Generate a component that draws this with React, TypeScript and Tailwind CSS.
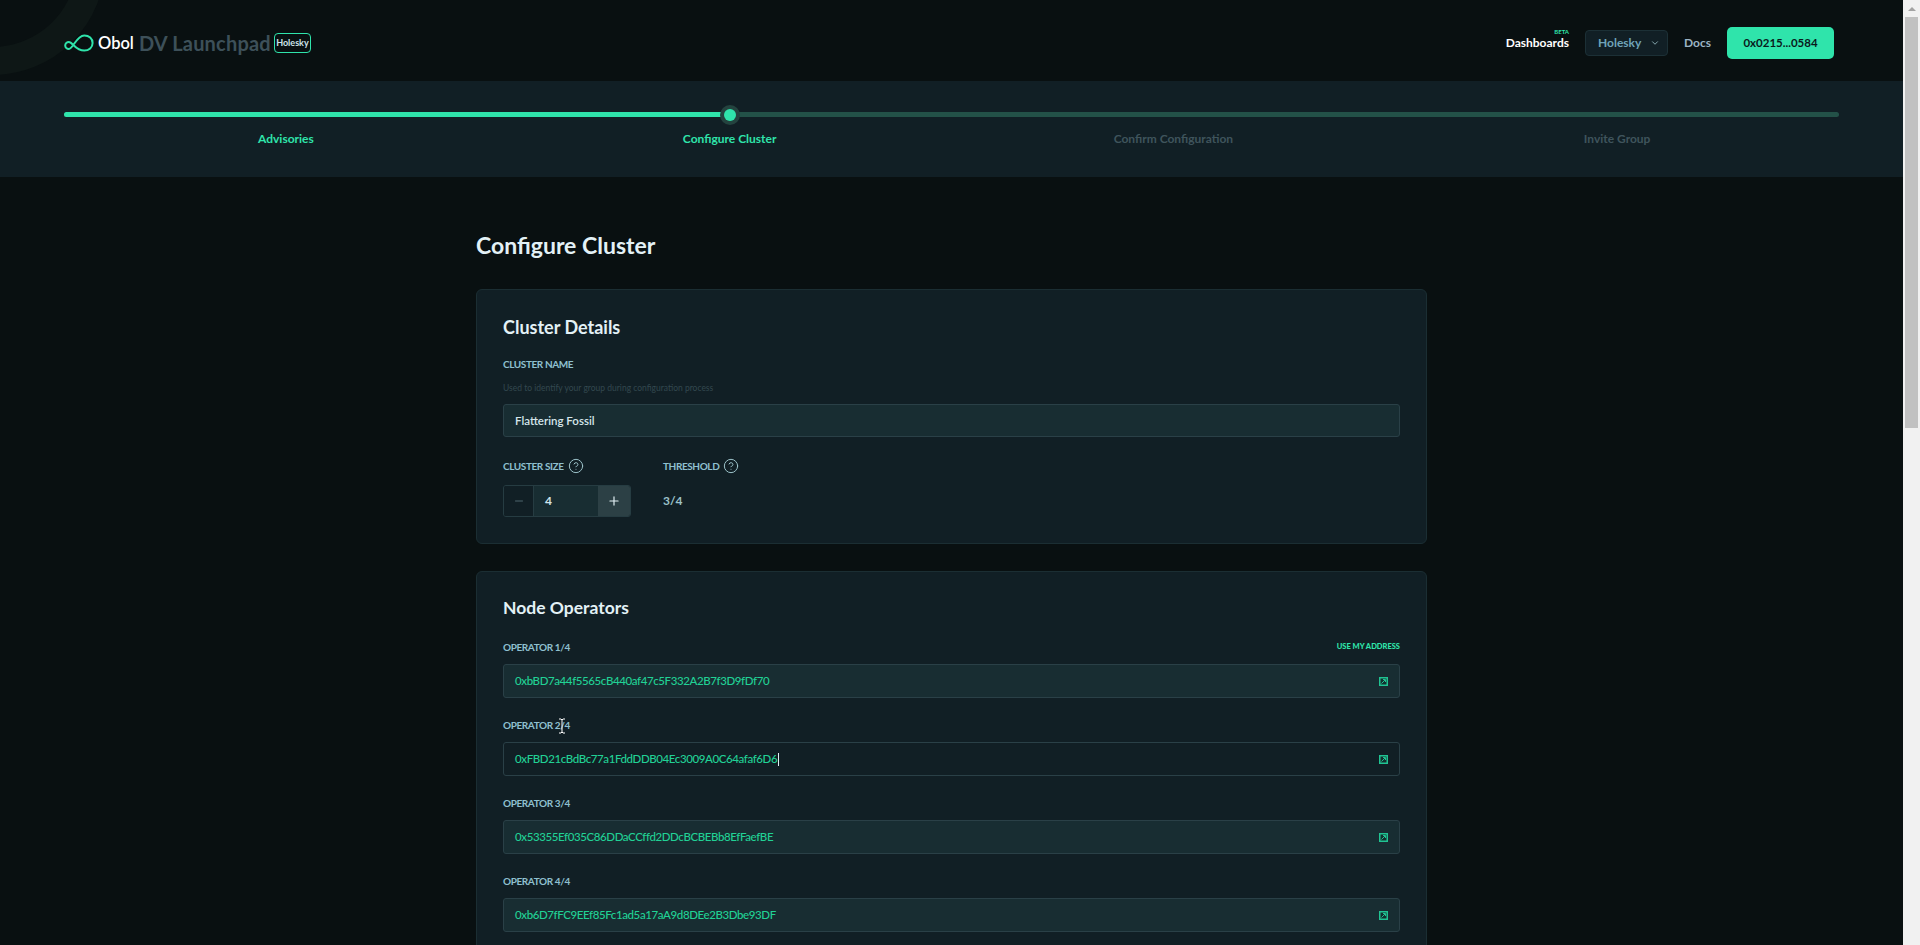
import { ChevronDown, CircleHelp, Minus, Plus } from 'lucide-react'

const operators = [
  { label: 'OPERATOR 1/4', address: '0xbBD7a44f5565cB440af47c5F332A2B7f3D9fDf70' },
  { label: 'OPERATOR 2/4', address: '0xFBD21cBdBc77a1FddDDB04Ec3009A0C64afaf6D6', focused: true },
  { label: 'OPERATOR 3/4', address: '0x53355Ef035C86DDaCCffd2DDcBCBEBb8EfFaefBE' },
  { label: 'OPERATOR 4/4', address: '0xb6D7fFC9EEf85Fc1ad5a17aA9d8DEe2B3Dbe93DF' },
]

const steps = [
  { label: 'Advisories', active: true },
  { label: 'Configure Cluster', active: true },
  { label: 'Confirm Configuration', active: false },
  { label: 'Invite Group', active: false },
]

function ObolMark() {
  return (
    <svg width="30" height="18" viewBox="0 0 30 18" fill="none" className="shrink-0">
      <path
        d="M1.2 11.5C1.2 9.4 2.9 8 4.9 8C8.6 8 11.5 16.6 20.3 16.6C25 16.6 28.6 13.3 28.6 9C28.6 4.7 25 1.4 20.3 1.4C12.5 1.4 9 15 4.9 15C2.9 15 1.2 13.6 1.2 11.5Z"
        stroke="#2FE4AB"
        strokeWidth="2"
      />
    </svg>
  )
}

function Header() {
  return (
    <header className="relative h-[81px] flex items-center justify-between pt-[5px] pl-16 pr-[69px] overflow-hidden">
      {/* faint arc in the corner */}
      <div className="absolute -left-[120px] -top-[150px] w-[225px] h-[225px] rounded-full border-[28px] border-[#0e1716]" />
      <div className="relative flex items-center">
        <ObolMark />
        <span className="ml-[4px] text-[16.5px] leading-none font-semibold text-white">Obol</span>
        <span className="ml-[5px] text-[20px] leading-none font-bold tracking-[0.2px] text-[#3d5059]">DV Launchpad</span>
        <span className="ml-[3px] -mt-px h-5 w-[37px] flex items-center justify-center rounded-[4px] border border-[#2FE4AB] text-[9px] font-bold text-[#cfe3ea]">
          Holesky
        </span>
      </div>
      <div className="relative flex items-center">
        <div className="relative text-[12px] font-bold text-white">
          Dashboards
          <span className="absolute right-0 -top-[5px] text-[6px] leading-none font-bold text-[#2FE4AB]">BETA</span>
        </div>
        <div className="ml-4 h-[26px] w-[83px] pl-3 flex items-center rounded-[4px] border border-[#1c3036] bg-[#111f25] text-[12px] font-bold text-[#6fa3b8]">
          Holesky
          <ChevronDown className="ml-[9px] h-[10px] w-[10px] text-[#9cc2c9]" />
        </div>
        <span className="ml-4 text-[12px] font-bold text-[#9cb4c4]">Docs</span>
        <button className="ml-4 h-8 w-[107px] rounded-[5px] bg-[#2FE4AB] text-[11.5px] font-bold text-[#0a1a1c]">
          0x0215...0584
        </button>
      </div>
    </header>
  )
}

function Stepper() {
  return (
    <section className="h-[96px] bg-[#111f25] px-16 pt-[31px]">
      <div className="relative h-[5px] rounded-full bg-[#235148]">
        <div className="h-full w-[37.5%] rounded-l-full bg-[#2FE4AB]" />
        <div className="absolute left-[37.5%] top-1/2 -ml-[6px] -mt-[6px] h-3 w-3 rounded-full bg-[#2FE4AB] ring-4 ring-[#24433f]" />
      </div>
      <div className="grid grid-cols-4 mt-[15px]">
        {steps.map((s) => (
          <div
            key={s.label}
            className={`text-center text-[12px] leading-[14px] font-bold ${s.active ? 'text-[#2FE4AB]' : 'text-[#3f545c]'}`}
          >
            {s.label}
          </div>
        ))}
      </div>
    </section>
  )
}

function FieldLabel({ children, help }: { children: string; help?: boolean }) {
  return (
    <div className="flex items-center h-[14px] text-[10px] font-bold tracking-[-0.4px] text-[#8fc0d0]">
      {children}
      {help && <CircleHelp className="ml-[4px] h-4 w-4 shrink-0 text-[#9cc2c9]" strokeWidth={1.5} />}
    </div>
  )
}

function ClusterDetails() {
  return (
    <div className="h-[255px] rounded-[6px] border border-[#1b2e33] bg-[#111f25] px-[26px] pt-[26px]">
      <h2 className="text-[18px] leading-[22px] font-bold text-[#e3f1f6]">Cluster Details</h2>
      <div className="mt-[19px]">
        <FieldLabel>CLUSTER NAME</FieldLabel>
      </div>
      <p className="mt-[10px] text-[8.5px] leading-[14px] text-[#33484f]">
        Used to identify your group during configuration process
      </p>
      <div className="mt-[9px] h-[33px] flex items-center rounded-[3px] border border-[#2a4047] bg-[#182d32] px-[11px] text-[11.5px] font-semibold text-[#d5e6ea]">
        Flattering Fossil
      </div>
      <div className="mt-[22px] flex">
        <div className="w-[160px]">
          <FieldLabel help>CLUSTER SIZE</FieldLabel>
          <div className="mt-[12px] flex h-8 w-[128px] rounded-[3px] border border-[#263c42] overflow-hidden">
            <div className="w-[30px] flex items-center justify-center border-r border-[#263c42] bg-[#111f25]">
              <Minus className="h-[12px] w-[12px] text-[#4f666e]" />
            </div>
            <div className="flex-1 flex items-center pl-[11px] bg-[#182d32] text-[12px] font-bold text-[#cfe3ea]">4</div>
            <div className="w-[32px] flex items-center justify-center bg-[#2c4045]">
              <Plus className="h-[14px] w-[14px] text-[#e3f1f6]" />
            </div>
          </div>
        </div>
        <div>
          <FieldLabel help>THRESHOLD</FieldLabel>
          <div className="mt-[12px] h-8 flex items-center text-[12px] font-bold text-[#9cc2c9]">3/4</div>
        </div>
      </div>
    </div>
  )
}

function ExternalIcon() {
  return (
    <svg width="9" height="9" viewBox="0 0 9 9" className="shrink-0">
      <rect width="9" height="9" fill="#20c392" />
      <rect x="1.5" y="1.5" width="6" height="6" fill="#13302f" />
      <path d="M2.5 6.5L6 3M4 2.5H6.5V5" stroke="#20c392" strokeWidth="1" fill="none" />
    </svg>
  )
}

function NodeOperators() {
  return (
    <div className="mt-[27px] rounded-[6px] border border-[#1b2e33] bg-[#111f25] px-[26px] pt-[25px] pb-10">
      <h2 className="text-[17.5px] leading-[22px] font-bold text-[#e3f1f6]">Node Operators</h2>
      <div className="mt-[21px] flex flex-col gap-[20px]">
        {operators.map((op) => (
          <div key={op.label}>
            <div className="flex items-center justify-between h-[14px]">
              <FieldLabel>{op.label}</FieldLabel>
              {op.label === 'OPERATOR 1/4' && (
                <span className="text-[7.5px] font-black text-[#2FE4AB]">USE MY ADDRESS</span>
              )}
            </div>
            <div
              className={`mt-[10px] h-[34px] flex items-center justify-between rounded-[3px] border border-[#2a4047] px-[11px] text-[11.5px] font-medium tracking-[-0.4px] text-[#21d195] ${
                op.focused ? 'bg-[#111f25]' : 'bg-[#182d32]'
              }`}
            >
              <span className="flex items-center">
                {op.address}
                {op.focused && <span className="ml-px h-[13px] w-px bg-[#e3f1f6]" />}
              </span>
              <ExternalIcon />
            </div>
          </div>
        ))}
      </div>
      <div className="h-[120px]" />
    </div>
  )
}

function Scrollbar() {
  return (
    <aside className="w-[17px] shrink-0 flex flex-col items-center bg-[#f1f1f1]">
      <div className="h-[17px] w-full flex items-center justify-center">
        <div className="border-x-[4px] border-b-[4px] border-x-transparent border-b-[#a3a3a3]" />
      </div>
      <div className="h-[411px] w-[13px] bg-[#c1c1c1]" />
    </aside>
  )
}

export default function App() {
  return (
    <div className="h-screen flex overflow-hidden bg-[#091011] font-['Lato','Liberation_Sans',sans-serif]">
      <div className="flex-1 min-w-0">
        <Header />
        <Stepper />
        <main className="relative mx-auto w-[951px] pt-[54px] pb-16">
          <h1 className="text-[23px] leading-[28px] font-bold text-[#e3f1f6]">Configure Cluster</h1>
          <div className="mt-[30px]">
            <ClusterDetails />
            <NodeOperators />
          </div>
          {/* mouse cursor caught in the shot */}
          <svg width="8" height="16" viewBox="0 0 8 16" className="absolute left-[82px] top-[541px]">
            <path d="M1 1H3L4 2L5 1H7M4 2V14M1 15H3L4 14L5 15H7" stroke="#fff" strokeWidth="1" fill="none" />
          </svg>
        </main>
      </div>
      <Scrollbar />
    </div>
  )
}
